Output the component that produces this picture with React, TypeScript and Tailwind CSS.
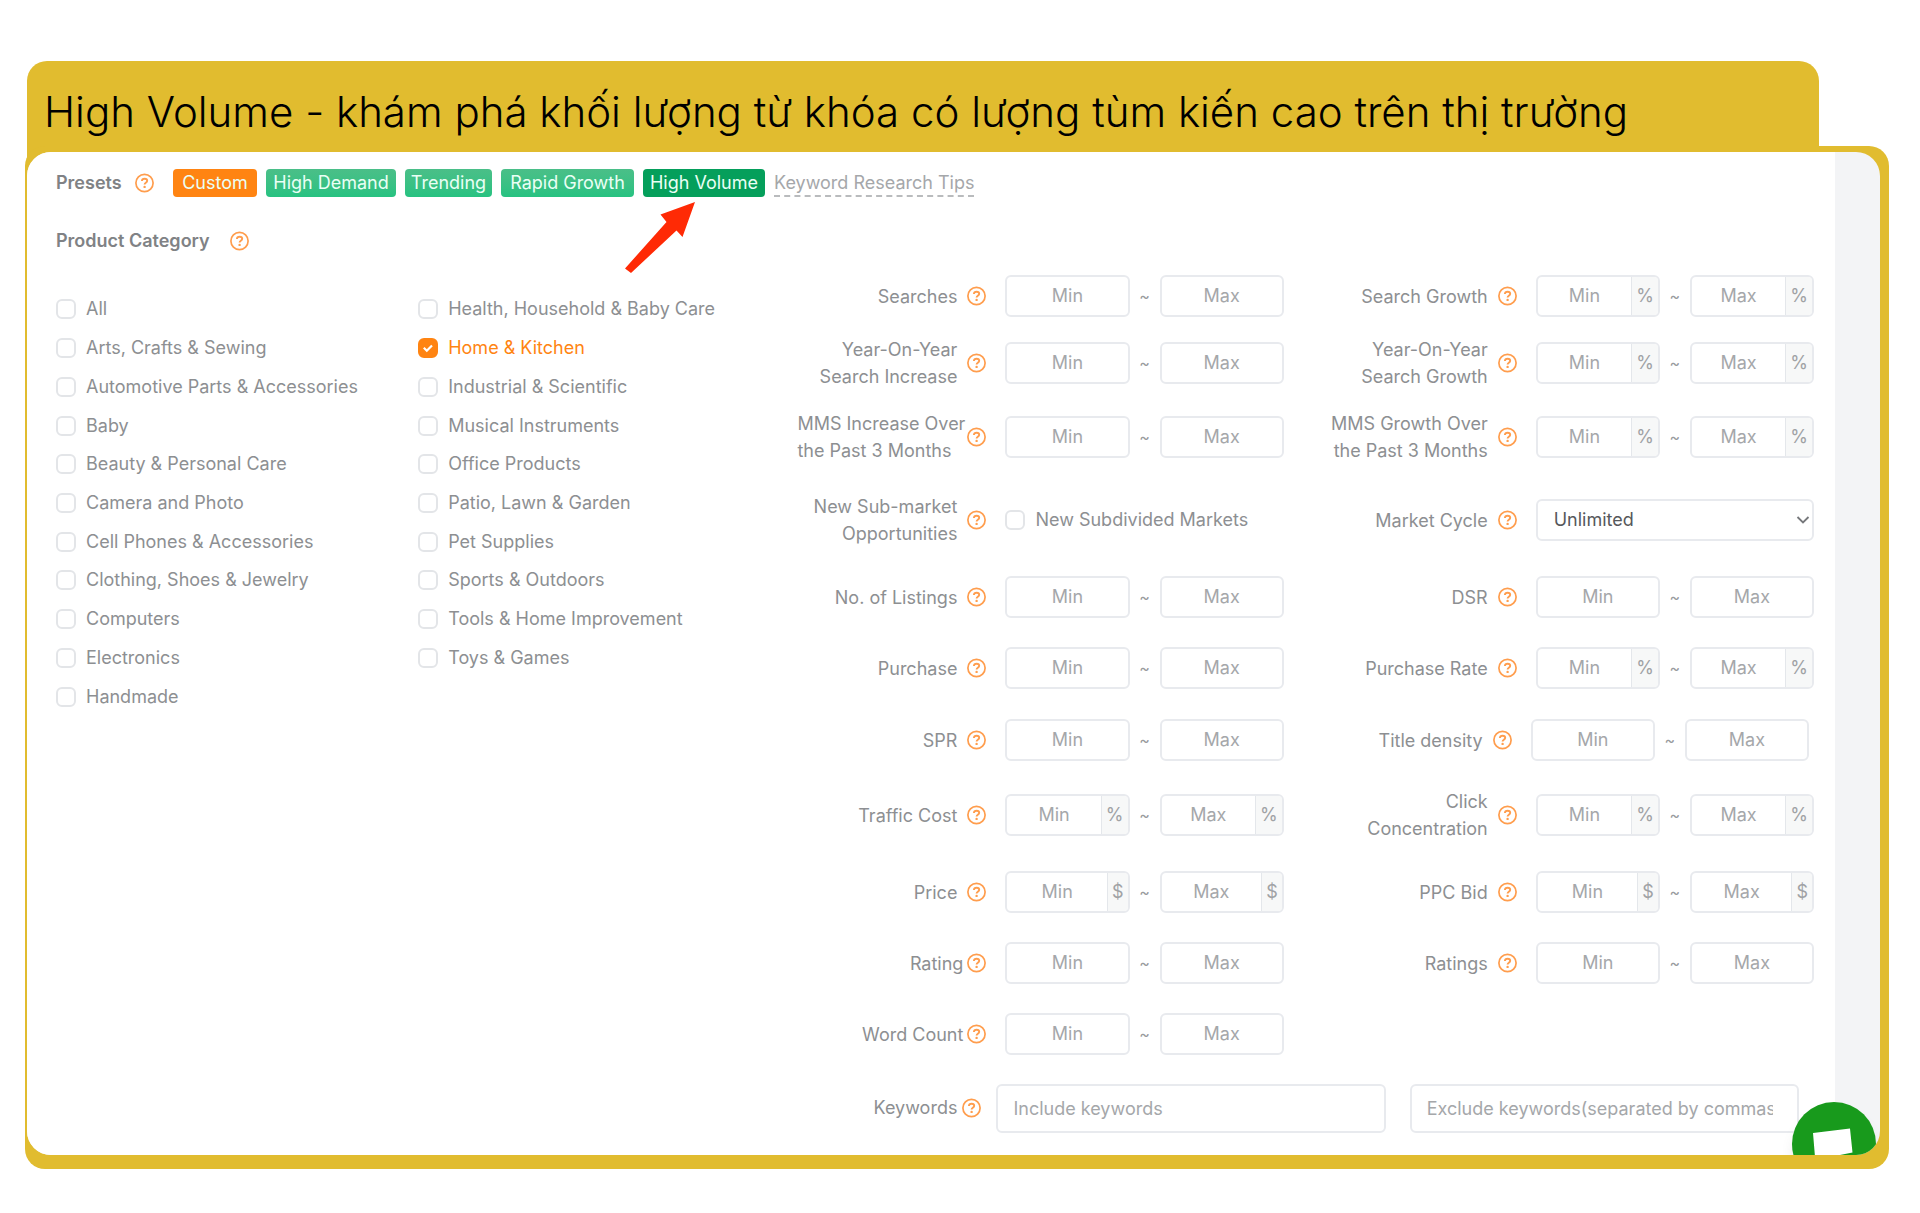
import { useState } from 'react';
import type { ReactNode } from 'react';

const leftCategories = [
  'All',
  'Arts, Crafts & Sewing',
  'Automotive Parts & Accessories',
  'Baby',
  'Beauty & Personal Care',
  'Camera and Photo',
  'Cell Phones & Accessories',
  'Clothing, Shoes & Jewelry',
  'Computers',
  'Electronics',
  'Handmade',
];

const rightCategories = [
  'Health, Household & Baby Care',
  'Home & Kitchen',
  'Industrial & Scientific',
  'Musical Instruments',
  'Office Products',
  'Patio, Lawn & Garden',
  'Pet Supplies',
  'Sports & Outdoors',
  'Tools & Home Improvement',
  'Toys & Games',
];

const toId = (text: string) => text.toLowerCase().replace(/[^a-z0-9]+/g, '-');

function HelpIcon() {
  return (
    <svg viewBox="0 0 20 20" className="size-5 shrink-0" fill="none" stroke="#ff9d4d" aria-hidden="true">
      <circle cx="9.5" cy="10" r="8.600" strokeWidth="1.7" />
      <path d="M6.900 8c.1-1.500 1.200-2.300 2.700-2.300s2.600.8 2.600 2.100c0 1.900-2.600 2-2.600 3.700" strokeWidth="1.900" />
      <circle cx="9.600" cy="13.900" r="1.200" fill="#ff9d4d" stroke="none" />
    </svg>
  );
}

function CheckItem({ label, defaultChecked = false }: { label: string; defaultChecked?: boolean }) {
  const [checked, setChecked] = useState(defaultChecked);
  return (
    <label className="flex items-center gap-2.5 whitespace-nowrap text-[#8d8f92] has-checked:text-[#ff8412]">
      <span className="relative flex size-5">
        <input
          type="checkbox"
          checked={checked}
          onChange={(e) => setChecked(e.target.checked)}
          className="size-5 appearance-none rounded-md border-2 border-[#e3e5e8] bg-white checked:border-[#ff8412] checked:bg-[#ff8412]"
        />
        {checked && (
          <svg viewBox="0 0 20 20" className="pointer-events-none absolute inset-0 size-5" fill="none" stroke="white" strokeWidth="2.200" aria-hidden="true">
            <path d="M5.800 9.800l3 2.900 5.200-5.200" />
          </svg>
        )}
      </span>
      {label}
    </label>
  );
}

type BoundProps = { id: string; hint: 'Min' | 'Max'; name: string; unit?: string };

function Bound({ id, hint, name, unit }: BoundProps) {
  return (
    <span className="flex h-[42px] min-w-0 flex-1 overflow-hidden rounded-md border-2 border-[#e8eaee] bg-white">
      <input
        id={id}
        placeholder={hint}
        aria-label={`${name} ${hint}`}
        className="w-0 min-w-0 flex-1 text-center outline-none placeholder:text-[#a5a7aa]"
      />
      {unit && (
        <span className="flex items-center border-l border-[#e4e7eb] bg-[#f7f8f8] px-1 text-[#a0a2a5]">{unit}</span>
      )}
    </span>
  );
}

type FieldProps = {
  label: string;
  lines?: string[];
  unit?: string;
  tight?: boolean;
  startAligned?: boolean;
  shifted?: boolean;
  children?: ReactNode;
};

function Field({ label, lines = [label], unit, tight, startAligned, shifted, children }: FieldProps) {
  const id = toId(label);
  return (
    <div className={shifted ? '-ml-[5px] flex items-center pr-[5px]' : 'flex items-center'}>
      <label
        htmlFor={id}
        className={`shrink-0 leading-[27px] whitespace-nowrap ${startAligned ? 'text-left' : 'text-right'} ${tight ? 'mr-1 w-[166px]' : 'mr-2.5 w-40'}`}
      >
        {lines.map((line) => (
          <span key={line} className="block">
            {line}
          </span>
        ))}
      </label>
      <HelpIcon />
      <div className="ml-[18px] flex min-w-0 flex-1 items-center">
        {children ?? (
          <>
            <Bound id={id} hint="Min" name={label} unit={unit} />
            <span className="w-[30px] text-center text-base text-[#999b9e]">~</span>
            <Bound id={`${id}-max`} hint="Max" name={label} unit={unit} />
          </>
        )}
      </div>
    </div>
  );
}

function ChatButton() {
  return (
    <button type="button" aria-label="Chat" className="absolute right-1 -bottom-[31px] size-[84px] rounded-full bg-[#189a1c] shadow-lg">
      <svg viewBox="0 0 84 84" className="size-full" aria-hidden="true">
        <path d="M21 31L58 26.500L60.500 50.500L48 53L47 62L38 53.500L23 55Z" fill="white" />
      </svg>
    </button>
  );
}

const preset = 'flex h-7 items-center justify-center rounded-sm text-[#eafff5]';
const green = 'bg-linear-to-b from-[#4abf88] to-[#26c281]';
const keywordBox =
  'h-[49px] min-w-0 flex-1 rounded-md border-2 border-[#e8eaee] bg-white pr-6 pl-[15px] outline-none placeholder:text-[#a5a7aa]';

export default function App() {
  return (
    <div className="min-h-screen bg-white pt-[61px] font-['Inter',sans-serif]">
      <header className="mr-[101px] ml-[27px] h-[100px] rounded-t-[20px] bg-[#e1bc2f] px-[17px] pt-[19px]">
        <h1 className="text-[42px] leading-[64px] font-light whitespace-nowrap text-black">
          High Volume - khám phá khối lượng từ khóa có lượng tùm kiến cao trên thị trường
        </h1>
      </header>

      <div className="-mt-[15px] mr-[31px] ml-[25px] rounded-[20px] bg-[#e1bc2f] pt-1.5 pr-[9px] pb-3.5 pl-0.5">
        <div className="relative flex overflow-hidden rounded-3xl bg-[#f3f4f6] text-lg text-[#8d8f92]">
          <main className="relative mr-[45px] min-w-0 flex-1 bg-white pt-[17px] pr-[21px] pb-[11px] pl-[29px]">
            <div className="flex items-center">
              <span className="w-[79px] font-semibold text-[#808285]">Presets</span>
              <HelpIcon />
              <div className="ml-[18px] flex gap-[9px]">
                <button type="button" className={`${preset} w-21 bg-[#ff8412]`}>Custom</button>
                <button type="button" className={`${preset} ${green} w-[130px]`}>High Demand</button>
                <button type="button" className={`${preset} ${green} w-[87px]`}>Trending</button>
                <button type="button" className={`${preset} ${green} w-[133px]`}>Rapid Growth</button>
                <button type="button" className={`${preset} w-[122px] bg-[#059f5b]`}>High Volume</button>
                <a href="#tips" className="h-7 border-b-2 border-dashed border-[#b9bbbd] leading-[28px] text-[#a5a7aa]">
                  Keyword Research Tips
                </a>
              </div>
            </div>

            <div className="grid grid-cols-[741fr_1016fr]">
              <section aria-labelledby="category-title">
                <div className="flex items-center gap-2.5 pt-[30px]">
                  <h2 id="category-title" className="w-[164px] font-semibold whitespace-nowrap text-[#808285]">
                    Product Category
                  </h2>
                  <HelpIcon />
                </div>
                <div className="mt-[35px] grid h-[426px] grid-flow-col grid-cols-[362fr_379fr] grid-rows-11">
                  {leftCategories.map((name) => (
                    <CheckItem key={name} label={name} />
                  ))}
                  {rightCategories.map((name) => (
                    <CheckItem key={name} label={name} defaultChecked={name === 'Home & Kitchen'} />
                  ))}
                </div>
              </section>

              <form className="pt-[65px]">
                <div className="grid grid-cols-2 grid-rows-[68px_66px_82px_84px_70px_72px_72px_78px_76px_66px_76px] items-center gap-x-11">
                  <Field label="Searches" />
                  <Field label="Search Growth" unit="%" />
                  <Field label="Year-On-Year Search Increase" lines={['Year-On-Year', 'Search Increase']} />
                  <Field label="Year-On-Year Search Growth" lines={['Year-On-Year', 'Search Growth']} unit="%" />
                  <Field label="MMS Increase Over the Past 3 Months" lines={['MMS Increase Over', 'the Past 3 Months']} startAligned />
                  <Field label="MMS Growth Over the Past 3 Months" lines={['MMS Growth Over', 'the Past 3 Months']} unit="%" />
                  <Field label="New Sub-market Opportunities" lines={['New Sub-market', 'Opportunities']}>
                    <CheckItem label="New Subdivided Markets" />
                  </Field>
                  <Field label="Market Cycle">
                    <span className="relative flex flex-1">
                      <select
                        id="market-cycle"
                        className="h-[42px] w-full appearance-none rounded-md border-2 border-[#e8eaee] bg-white px-4 text-[#56585b] outline-none"
                      >
                        <option>Unlimited</option>
                      </select>
                      <svg viewBox="0 0 14 10" className="pointer-events-none absolute top-4 right-1 h-2.5 w-3.5" fill="none" stroke="#76787b" strokeWidth="1.800" aria-hidden="true">
                        <path d="M1.500 2L7 7.500L12.500 2" />
                      </svg>
                    </span>
                  </Field>
                  <Field label="No. of Listings" />
                  <Field label="DSR" />
                  <Field label="Purchase" />
                  <Field label="Purchase Rate" unit="%" />
                  <Field label="SPR" />
                  <Field label="Title density" shifted />
                  <Field label="Traffic Cost" unit="%" />
                  <Field label="Click Concentration" lines={['Click', 'Concentration']} unit="%" />
                  <Field label="Price" unit="$" />
                  <Field label="PPC Bid" unit="$" />
                  <Field label="Rating" tight />
                  <Field label="Ratings" />
                  <Field label="Word Count" tight />
                </div>
                <div className="flex h-[72px] items-center pr-[15px]">
                  <label htmlFor="include" className="mr-[5px] w-40 shrink-0 text-right">
                    Keywords
                  </label>
                  <HelpIcon />
                  <div className="ml-3.5 flex min-w-0 flex-1 gap-6">
                    <input id="include" placeholder="Include keywords" className={keywordBox} />
                    <input
                      aria-label="Exclude keywords"
                      placeholder="Exclude keywords(separated by commas)"
                      className={keywordBox}
                    />
                  </div>
                </div>
              </form>
            </div>

            <svg viewBox="0 0 70 72" className="pointer-events-none absolute top-[50px] left-[598px] h-[72px] w-[70px]" aria-hidden="true">
              <path d="M70 0L57.500 35L51.500 28.500L6 71L0 66.500L41.500 20L35.500 12.500Z" fill="#ff2a05" />
            </svg>
          </main>
          <ChatButton />
        </div>
      </div>
    </div>
  );
}
